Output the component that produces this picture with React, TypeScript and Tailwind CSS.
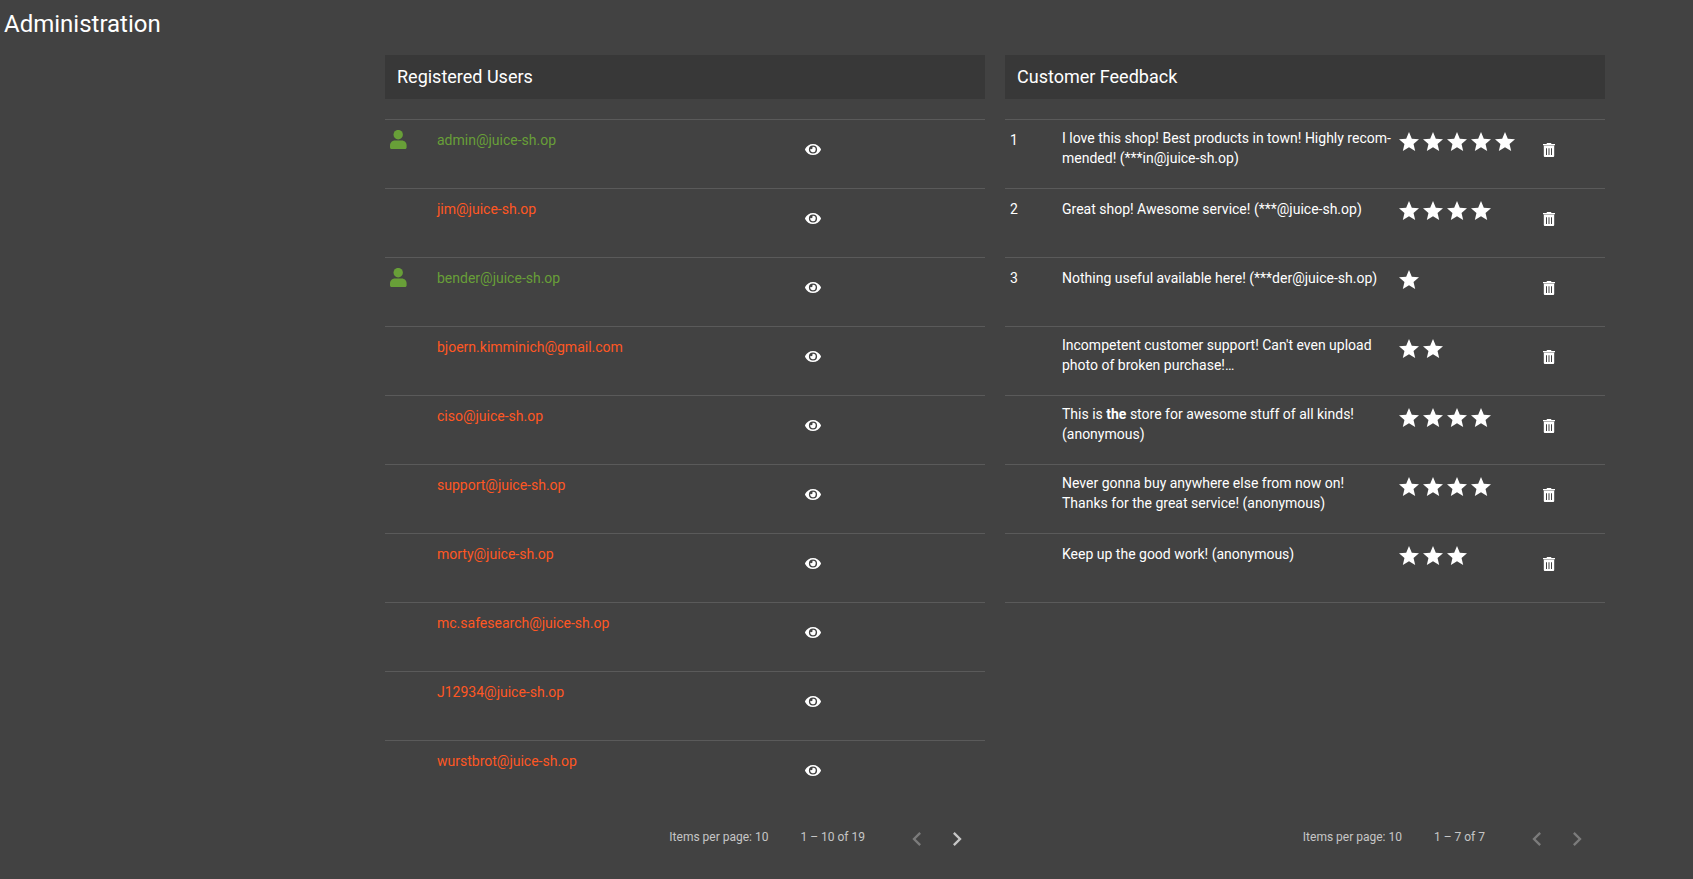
import React from "react";
import { MdStar, MdChevronLeft, MdChevronRight } from "react-icons/md";

const users = [
  { email: "admin@juice-sh.op", active: true },
  { email: "jim@juice-sh.op", active: false },
  { email: "bender@juice-sh.op", active: true },
  { email: "bjoern.kimminich@gmail.com", active: false },
  { email: "ciso@juice-sh.op", active: false },
  { email: "support@juice-sh.op", active: false },
  { email: "morty@juice-sh.op", active: false },
  { email: "mc.safesearch@juice-sh.op", active: false },
  { email: "J12934@juice-sh.op", active: false },
  { email: "wurstbrot@juice-sh.op", active: false },
];

const feedback: { id: string; comment: React.ReactNode; rating: number }[] = [
  {
    id: "1",
    comment: "I love this shop! Best products in town! Highly recom\u00admended! (***in@juice-sh.op)",
    rating: 5,
  },
  { id: "2", comment: "Great shop! Awesome service! (***@juice-sh.op)", rating: 4 },
  { id: "3", comment: "Nothing useful available here! (***der@juice-sh.op)", rating: 1 },
  { id: "", comment: "Incompetent customer support! Can't even upload photo of broken purchase!…", rating: 2 },
  {
    id: "",
    comment: (
      <>
        This is <b>the</b> store for awesome stuff of all kinds! (anonymous)
      </>
    ),
    rating: 4,
  },
  {
    id: "",
    comment: "Never gonna buy anywhere else from now on! Thanks for the great service! (anonymous)",
    rating: 4,
  },
  { id: "", comment: "Keep up the good work! (anonymous)", rating: 3 },
];

function UserIcon() {
  return (
    <svg viewBox="0 0 17 19" className="mt-0.5 h-[19px] w-[17px]" fill="currentColor" aria-hidden="true">
      <ellipse cx="8.2" cy="4.7" rx="4.7" ry="4.8" />
      <path d="M5 10.4H11.6C14.8 10.4 16.6 12.6 16.6 15.4V17.2C16.6 18.4 16 19 14.8 19H1.8C.6 19 0 18.4 0 17.2V15.4C0 12.6 2 10.4 5 10.4Z" />
    </svg>
  );
}

function EyeIcon() {
  return (
    <svg viewBox="0 0 16 12" className="h-3 w-4" fill="currentColor" aria-hidden="true">
      <path
        fillRule="evenodd"
        d="M8 0C11.5 0 14.4 2 15.9 5.1C16 5.4 16 5.6 15.9 5.9C14.4 9 11.5 11 8 11S1.6 9 .1 5.9C0 5.6 0 5.4 .1 5.1C1.6 2 4.5 0 8 0ZM8 1.4A4.1 4.1 0 1 0 8 9.6A4.1 4.1 0 1 0 8 1.4Z"
      />
      <path d="M8 2.8A2.7 2.7 0 1 1 5.4 4.8A1.35 1.35 0 0 0 7.3 2.9A2.7 2.7 0 0 1 8 2.8Z" />
    </svg>
  );
}

function TrashIcon() {
  return (
    <svg viewBox="0 0 12 14" className="h-[14px] w-3" fill="currentColor" aria-hidden="true">
      <path d="M4 0H8L8.5 1H12V2.2H0V1H3.5Z" />
      <path fillRule="evenodd" d="M.8 3H11.2V13Q11.2 14 10.2 14H1.8Q.8 14 .8 13ZM3 5.2V12H4V5.2ZM5.5 5.2V12H6.5V5.2ZM8 5.2V12H9V5.2Z" />
      <path d="M.8 2.2H11.2V3H.8Z" opacity="0.6" />
    </svg>
  );
}

function PanelHeading({ children }: { children: React.ReactNode }) {
  return (
    <h2 className="mb-5 bg-[#383838] px-3 py-2 text-[18px] leading-7 font-normal">{children}</h2>
  );
}

function Paginator({ range, hasNext }: { range: string; hasNext: boolean }) {
  return (
    <div className="flex items-start justify-end pr-2 text-[12px] text-[#c6c6c6]">
      <span className="py-[17px]">Items per page: 10</span>
      <span className="mx-8 py-[17px]">{range}</span>
      <button
        type="button"
        aria-label="Previous page"
        disabled
        className="mt-[9px] flex size-10 items-center justify-center text-[#7b7b7b]"
      >
        <MdChevronLeft size={28} />
      </button>
      <button
        type="button"
        aria-label="Next page"
        disabled={!hasNext}
        className="mt-[9px] flex size-10 items-center justify-center text-[#c6c6c6] disabled:text-[#7b7b7b]"
      >
        <MdChevronRight size={28} />
      </button>
    </div>
  );
}

function UserTable() {
  return (
    <table className="w-full table-fixed border-collapse">
      <colgroup>
        <col className="w-[52px]" />
        <col />
        <col className="w-[188px]" />
      </colgroup>
      <tbody>
        {users.map((user) => (
          <tr key={user.email} className="h-[69px] border-t border-[#5a5a5a]">
            <td className="pt-2 pl-[5px] align-top text-[#689f38]">{user.active && <UserIcon />}</td>
            <td className={user.active ? "pt-2.5 align-top text-[#689f38]" : "pt-2.5 align-top text-[#ff5722]"}>
              {user.email}
            </td>
            <td className="pt-2 align-top">
              <button type="button" aria-label={`Show ${user.email}`} className="flex h-11 items-center px-2">
                <EyeIcon />
              </button>
            </td>
          </tr>
        ))}
      </tbody>
    </table>
  );
}

function FeedbackTable() {
  return (
    <table className="w-full table-fixed border-collapse">
      <colgroup>
        <col className="w-[57px]" />
        <col />
        <col className="w-[138px]" />
        <col className="w-[70px]" />
      </colgroup>
      <tbody>
        {feedback.map((entry, index) => (
          <tr key={index} className="h-[69px] border-y border-[#5a5a5a]">
            <td className="pt-2.5 pl-[5px] align-top">{entry.id}</td>
            <td
              className={
                index === 0 || (index > 2 && index < 6) ? "pt-2 pr-[5px] align-top" : "pt-2.5 pr-[5px] align-top"
              }
            >
              {entry.comment}
            </td>
            <td className="pt-2.5 align-top">
              <span role="img" aria-label={`${entry.rating} stars`} className="flex">
                {Array.from({ length: entry.rating }, (_, star) => (
                  <MdStar key={star} size={24} />
                ))}
              </span>
            </td>
            <td className="pt-2 align-top">
              <button type="button" aria-label="Delete feedback" className="flex h-11 items-center px-2">
                <TrashIcon />
              </button>
            </td>
          </tr>
        ))}
      </tbody>
    </table>
  );
}

export default function App() {
  return (
    <main className="min-h-screen bg-[#424242] font-['Roboto',sans-serif] text-[14px] leading-5 text-white">
      <h1 className="px-1 pt-2 text-[24px] leading-8 font-normal">Administration</h1>
      <div className="grid grid-cols-2 gap-5 pt-[15px] pr-[88px] pl-[385px]">
        <section className="flex flex-col">
          <PanelHeading>Registered Users</PanelHeading>
          <UserTable />
          <Paginator range="1 – 10 of 19" hasNext />
        </section>
        <section className="flex flex-col">
          <PanelHeading>Customer Feedback</PanelHeading>
          <div className="flex-1">
            <FeedbackTable />
          </div>
          <Paginator range="1 – 7 of 7" hasNext={false} />
        </section>
      </div>
    </main>
  );
}
